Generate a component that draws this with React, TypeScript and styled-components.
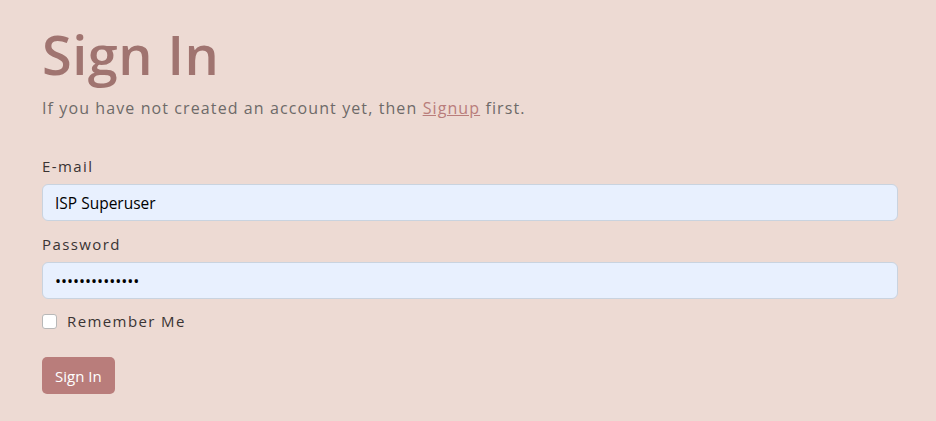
import React from "react";
import styled, { createGlobalStyle } from "styled-components";

const GlobalStyle = createGlobalStyle`
    html, body {
        margin: 0;
        padding: 0;
        background: #eddad3;
        font-family: "Open Sans", "Noto Sans", sans-serif;
    }
`;

const StyledPage = styled.div`
    width: 856px;
    padding: 21px 0 27px 42px;
    display: flex;
    flex-direction: column;
`;

const Title = styled.h1`
    margin: 0;
    font-size: 54px;
    font-weight: 600;
    line-height: 66px;
    color: #a07470;
    letter-spacing: 0.5px;
`;

const Lead = styled.p`
    margin: 10px 0 0;
    font-size: 16px;
    line-height: 22px;
    color: #6e6a69;
    letter-spacing: 1.1px;
    a {
        color: #b97d7b;
        text-decoration: underline;
    }
`;

const Form = styled.form`
    margin-top: 36px;
    display: flex;
    flex-direction: column;
`;

const Field = styled.div`
    display: flex;
    flex-direction: column;
    gap: 7px;
    margin-bottom: 12px;
`;

const Label = styled.label`
    font-size: 15px;
    line-height: 22px;
    color: #3a3433;
    letter-spacing: 1.4px;
`;

const Input = styled.input`
    box-sizing: border-box;
    width: 100%;
    height: 37px;
    padding: 0 12px;
    border: 1px solid #c9d3df;
    border-radius: 6px;
    background: #e8f0fe;
    font-family: inherit;
    font-size: ${(props) => (props.type === "password" ? "16px" : "15.5px")};
    color: #000;
    outline: none;
`;

const CheckRow = styled.label`
    display: flex;
    align-items: center;
    gap: 10px;
    margin-top: -1px;
    font-size: 15px;
    line-height: 22px;
    color: #3a3433;
    letter-spacing: 1.4px;
`;

const Box = styled.span`
    width: 15px;
    height: 15px;
    box-sizing: border-box;
    border: 1px solid #b8b8b8;
    border-radius: 3px;
    background: #fff;
`;

const Button = styled.button`
    align-self: flex-start;
    margin-top: 25px;
    height: 37px;
    padding: 0 13px;
    border: none;
    border-radius: 5px;
    background: #b97d7b;
    color: #fff;
    font-family: inherit;
    font-size: 15px;
    font-weight: 500;
`;

const App = () => {
    return (
        <StyledPage>
            <GlobalStyle />
            <Title>Sign In</Title>
            <Lead>
                If you have not created an account yet, then <a href="#">Signup</a> first.
            </Lead>
            <Form onSubmit={(e) => e.preventDefault()}>
                <Field>
                    <Label>E-mail</Label>
                    <Input type="text" defaultValue="ISP Superuser" />
                </Field>
                <Field>
                    <Label>Password</Label>
                    <Input type="password" defaultValue="12345678901234" />
                </Field>
                <CheckRow>
                    <Box />
                    Remember Me
                </CheckRow>
                <Button type="submit">Sign In</Button>
            </Form>
        </StyledPage>
    );
};

export default App;
